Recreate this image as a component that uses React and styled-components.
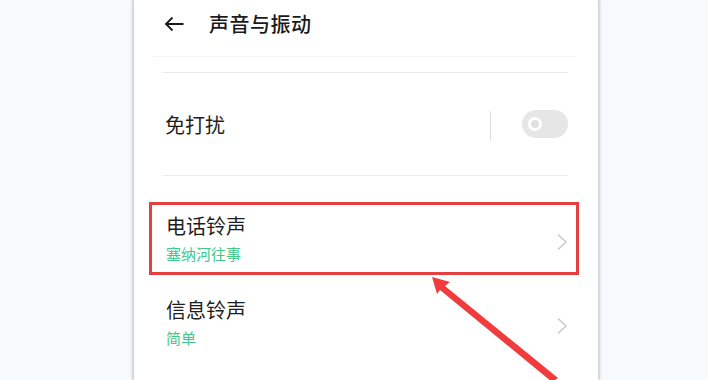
import React from "react";
import styled, { createGlobalStyle } from "styled-components";

const GlobalStyle = createGlobalStyle`
  html, body {
    margin: 0;
    padding: 0;
    background: #f6fafc;
    font-family: "Noto Sans CJK SC", "Noto Sans", sans-serif;
  }
`;

const Page = styled.div`
  width: 708px;
  height: 380px;
  overflow: hidden;
  position: relative;
`;

const Panel = styled.div`
  position: relative;
  margin-left: 134px;
  width: 464px;
  height: 380px;
  background: #ffffff;
  box-shadow: -2px 0 2px rgba(150, 160, 170, 0.45), 2px 0 2px rgba(150, 160, 170, 0.45);
`;

const Header = styled.div`
  display: flex;
  align-items: center;
  height: 46px;
  margin: 0 22px 0 19px;
  padding: 0 0 10px 11px;
  border-bottom: 1px solid #f4f4f4;
`;

const BackIcon = styled.svg`
  width: 20px;
  height: 16px;
  margin-right: 25px;
  margin-top: 1px;
`;

const Title = styled.div`
  font-size: 20px;
  font-weight: 500;
  color: #1a1a1a;
  letter-spacing: 0.5px;
`;

const List = styled.div`
  margin: 15px 30px 0 29px;
  border-top: 1px solid #e9e9e9;
`;

const SwitchRow = styled.div`
  display: flex;
  align-items: center;
  height: 102px;
  border-bottom: 1px solid #ececec;
`;

const Label = styled.div`
  flex: 1;
  font-size: 20px;
  color: #1e1e1e;
  padding-left: 2px;
`;

const Divider = styled.div`
  width: 1px;
  height: 30px;
  background: #dcdcdc;
  margin-right: 31px;
  margin-top: 3px;
`;

const Toggle = styled.div`
  width: 46px;
  height: 28px;
  border-radius: 14px;
  background: #e6e6e6;
  display: flex;
  align-items: center;
  padding-left: 6px;
  box-sizing: border-box;
`;

const Knob = styled.div`
  width: 14px;
  height: 14px;
  border-radius: 50%;
  border: 3px solid #ffffff;
  box-sizing: border-box;
  background: #e0e0e0;
`;

const NavRow = styled.div`
  display: flex;
  align-items: center;
  height: 84px;
  margin-top: ${(p) => p.$top || 0}px;
`;

const Texts = styled.div`
  flex: 1;
  display: flex;
  flex-direction: column;
  padding-left: 3px;
`;

const ItemTitle = styled.div`
  font-size: 20px;
  color: #1e1e1e;
  line-height: 28px;
  margin-top: ${(p) => p.$shift || 0}px;
`;

const Sub = styled.div`
  font-size: 15px;
  color: #41c98c;
  line-height: 28px;
`;

const Chevron = styled.svg`
  width: 12px;
  height: 18px;
  margin-top: 4px;
`;

const Highlight = styled.div`
  position: absolute;
  left: 15px;
  top: 202px;
  width: 430px;
  height: 73px;
  border: 3px solid #e63f3f;
  box-sizing: border-box;
  pointer-events: none;
`;

const Arrow = styled.svg`
  position: absolute;
  left: 0;
  top: 0;
  pointer-events: none;
`;

const ChevronIcon = () => (
  <Chevron viewBox="0 0 12 18">
    <path d="M2 1.5 L10 9 L2 16.5" fill="none" stroke="#c9c9c9" strokeWidth="1.5" />
  </Chevron>
);

export default function App() {
  return (
    <Page>
      <GlobalStyle />
      <Panel>
        <Header>
          <BackIcon viewBox="0 0 20 16">
            <path
              d="M19.5 8 H2 M8.5 1.5 L2 8 L8.5 14.5"
              fill="none"
              stroke="#1a1a1a"
              strokeWidth="1.8"
            />
          </BackIcon>
          <Title>声音与振动</Title>
        </Header>
        <List>
          <SwitchRow>
            <Label>免打扰</Label>
            <Divider />
            <Toggle>
              <Knob />
            </Toggle>
          </SwitchRow>
          <NavRow $top={22}>
            <Texts>
              <ItemTitle $shift={-1}>电话铃声</ItemTitle>
              <Sub>塞纳河往事</Sub>
            </Texts>
            <ChevronIcon />
          </NavRow>
          <NavRow>
            <Texts>
              <ItemTitle $shift={-1}>信息铃声</ItemTitle>
              <Sub>简单</Sub>
            </Texts>
            <ChevronIcon />
          </NavRow>
        </List>
        <Highlight />
      </Panel>
      <Arrow width="708" height="380" viewBox="0 0 708 380">
        <polygon
          points="432,277 450,282 445,286 558,378 552,382 440,290 437,294"
          fill="#f03c3c"
        />
      </Arrow>
    </Page>
  );
}
